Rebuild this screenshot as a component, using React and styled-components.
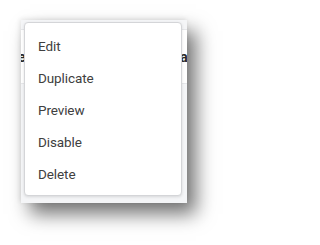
import React from 'react';
import styled, { createGlobalStyle } from 'styled-components';

const GlobalStyle = createGlobalStyle`
  html, body {
    margin: 0;
    padding: 0;
    background: #ffffff;
  }
  body {
    font-family: Roboto, "Liberation Sans", Arial, sans-serif;
  }
`;

const Page = styled.div`
  width: 229px;
  height: 245px;
  padding: 20px 0 0 21px;
  box-sizing: border-box;
`;

const Shot = styled.div`
  position: relative;
  width: 166px;
  height: 183px;
  background: #f4f5f7;
  overflow: hidden;
  box-shadow: 9px 11px 18px rgba(0, 0, 0, 0.55), -1px -1px 5px rgba(0, 0, 0, 0.1);
`;

const TableRow = styled.div`
  display: flex;
  justify-content: space-between;
  align-items: center;
  height: 53px;
  margin-top: 9px;
  border-top: 1px solid #e6e7ea;
  border-bottom: 1px solid #e6e7ea;
  background: #ffffff;
  font-size: 14px;
  font-weight: 700;
  color: #2a2a2a;
`;

const Cell = styled.span`
  margin: ${p => (p.right ? '0 -8px 0 0' : '0 0 0 -3px')};
`;

const Menu = styled.ul`
  position: absolute;
  left: 3px;
  top: 2px;
  width: 158px;
  height: 174px;
  box-sizing: border-box;
  margin: 0;
  padding: 7px 0;
  list-style: none;
  background: #ffffff;
  border: 1px solid #d4d5d8;
  border-radius: 4px;
  box-shadow: 0 1px 3px rgba(0, 0, 0, 0.12);
`;

const Item = styled.li`
  display: flex;
  align-items: center;
  height: 32px;
  padding: 0 13px;
  font-size: 13.5px;
  letter-spacing: -0.1px;
  color: #404040;
  cursor: pointer;
`;

const items = ['Edit', 'Duplicate', 'Preview', 'Disable', 'Delete'];

const App = () => (
  <>
    <GlobalStyle />
    <Page>
      <Shot>
        <TableRow>
          <Cell>e</Cell>
          <Cell right>ac</Cell>
        </TableRow>
        <Menu>
          {items.map(label => (
            <Item key={label}>{label}</Item>
          ))}
        </Menu>
      </Shot>
    </Page>
  </>
);

export default App;
